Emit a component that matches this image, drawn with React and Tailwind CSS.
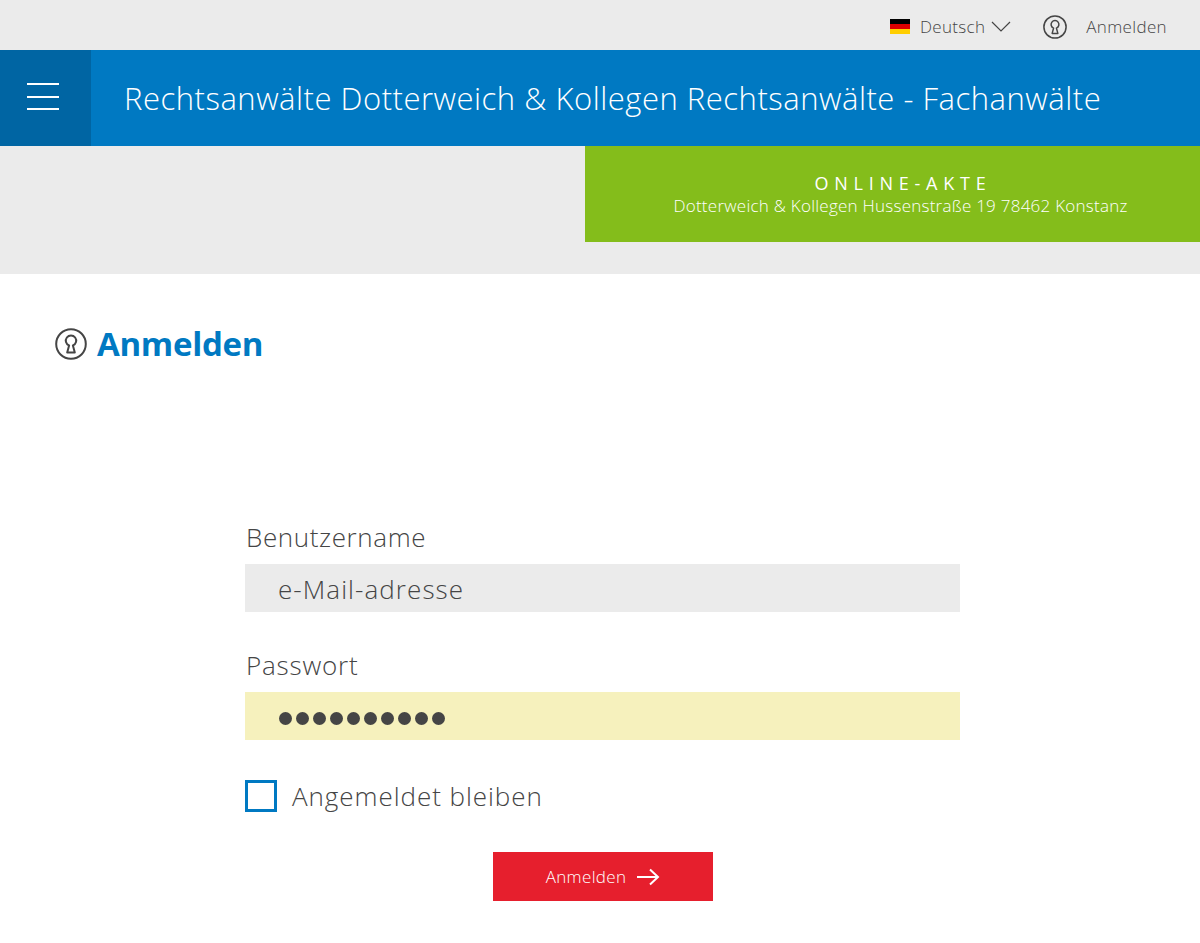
function KeyholeIcon({ className }) {
  return (
    <svg viewBox="0 0 32 32" className={className} fill="none" stroke="#454545">
      <circle cx="16" cy="16" r="14.8" strokeWidth="2" />
      <path
        d="M12.2 24.5h7.6l-1.9-7a5.2 5.2 0 1 0-3.8 0z"
        strokeWidth="2"
        strokeLinejoin="round"
      />
    </svg>
  );
}

function ChevronIcon() {
  return (
    <svg viewBox="0 0 20 11" className="w-5 h-[11px] mb-[2px]" fill="none" stroke="#454545" strokeWidth="1.2">
      <path d="M1 1l9 9 9-9" />
    </svg>
  );
}

function ArrowIcon() {
  return (
    <svg viewBox="0 0 24 18" className="w-6 h-[18px] -ml-[1px]" fill="none" stroke="#ffffff" strokeWidth="2">
      <path d="M1 9h21M14 1.5 22 9l-8 7.5" />
    </svg>
  );
}

export default function App() {
  return (
    <div className="min-h-[943px] bg-white font-['Open_Sans',sans-serif] font-light text-[#454545]">
      {/* Top bar */}
      <div className="h-[50px] bg-[#ebebeb] flex items-center justify-end pt-[4px] pr-[33px] text-[17px]">
        <div className="w-5 h-[15px] flex flex-col mr-[10px] mb-[2px]">
          <div className="flex-1 bg-black"></div>
          <div className="flex-1 bg-[#dd0000]"></div>
          <div className="flex-1 bg-[#ffce00]"></div>
        </div>
        <span className="tracking-[0.3px]">Deutsch</span>
        <div className="ml-[6px] mr-[32px] flex">
          <ChevronIcon />
        </div>
        <KeyholeIcon className="w-6 h-6 mr-[19px]" />
        <span className="tracking-[0.35px]">Anmelden</span>
      </div>

      {/* Header */}
      <div className="h-[96px] bg-[#0079c2] flex items-center">
        <div className="w-[91px] h-full bg-[#0065a3] flex flex-col items-center justify-center gap-[10.5px] pb-[3px] pr-[5px]">
          <div className="w-8 h-[2px] bg-white"></div>
          <div className="w-8 h-[2px] bg-white"></div>
          <div className="w-8 h-[2px] bg-white"></div>
        </div>
        <h1 className="ml-[33px] text-[31px] text-white tracking-[0.52px] whitespace-nowrap">
          Rechtsanwälte Dotterweich &amp; Kollegen Rechtsanwälte - Fachanwälte
        </h1>
      </div>

      {/* Kanzlei band */}
      <div className="h-[128px] bg-[#ebebeb] flex justify-end items-start">
        <div className="w-[615px] h-[96px] pl-[16px] bg-[#84bd1b] flex flex-col items-center justify-center text-white">
          <div className="text-[18px] font-normal leading-[24px] tracking-[5.75px] pl-[5px]">ONLINE-AKTE</div>
          <div className="text-[17px] leading-[22px] tracking-[0.25px]">
            Dotterweich &amp; Kollegen Hussenstraße 19 78462 Konstanz
          </div>
        </div>
      </div>

      {/* Page title */}
      <div className="flex items-center gap-[10px] pl-[55px] pt-[50px]">
        <KeyholeIcon className="w-8 h-8" />
        <h2 className="text-[33px] leading-10 font-bold text-[#0079c2] tracking-[-0.3px]">Anmelden</h2>
      </div>

      {/* Login form */}
      <form className="w-[715px] ml-[245px] mt-[155px]">
        <label className="block text-[26px] leading-[36px] mb-[9px] pl-[1px] tracking-[0.62px]">Benutzername</label>
        <div className="h-12 bg-[#ebebeb] pl-[33px] pt-[2px] flex items-center text-[26px] tracking-[1.07px]">e-Mail-adresse</div>

        <label className="block text-[26px] leading-[36px] mt-[35px] mb-[9px] pl-[1px] tracking-[0.8px]">Passwort</label>
        <div className="h-12 bg-[#f6f1bd] pl-[34px] pt-[4px] flex items-center gap-[4px]">
          {[...Array(10)].map((_, i) => (
            <span key={i} className="w-[13px] h-[13px] rounded-full bg-[#454545]"></span>
          ))}
        </div>

        <div className="flex items-center gap-[15px] mt-[40px]">
          <div className="w-8 h-8 border-[3px] border-[#0079c2] bg-white"></div>
          <span className="text-[26px] leading-[31px] tracking-[0.95px] pt-[1px]">Angemeldet bleiben</span>
        </div>

        <button
          type="button"
          className="flex items-center justify-center gap-[11px] w-[220px] h-[49px] mt-[40px] ml-[248px] bg-[#e61f2d] text-white text-[17px] tracking-[0.35px]"
        >
          Anmelden
          <ArrowIcon />
        </button>
      </form>
    </div>
  );
}
